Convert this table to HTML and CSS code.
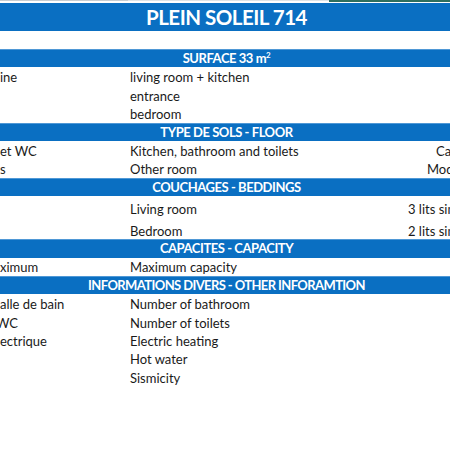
FILE: index.html
```html
<!DOCTYPE html>
<html>
<head>
<meta charset="utf-8">
<link rel="stylesheet" href="styles.css">
</head>
<body>
<div class="sheet">
  <div class="topline"><span class="tl-a"></span><span class="tl-b"></span><span class="tl-c"></span></div>
  <div class="title">PLEIN SOLEIL 714</div>
  <div class="blank"></div>

  <div class="bar">SURFACE 33 m<sup>2</sup></div>
  <div class="row"><span class="ca">ine</span><span class="cb">living room + kitchen</span><span class="cc"></span></div>
  <div class="row"><span class="ca"></span><span class="cb">entrance</span><span class="cc"></span></div>
  <div class="row"><span class="ca"></span><span class="cb">bedroom</span><span class="cc"></span></div>

  <div class="bar">TYPE DE SOLS - FLOOR</div>
  <div class="row"><span class="ca">et WC</span><span class="cb">Kitchen, bathroom and toilets</span><span class="cc c-ca">Carrelage</span></div>
  <div class="row"><span class="ca">s</span><span class="cb">Other room</span><span class="cc c-mo">Moquette</span></div>

  <div class="bar">COUCHAGES - BEDDINGS</div>
  <div class="row tall"><span class="ca"></span><span class="cb">Living room</span><span class="cc c-li">3 lits simples</span></div>
  <div class="row tall"><span class="ca"></span><span class="cb">Bedroom</span><span class="cc c-li">2 lits simples</span></div>

  <div class="bar">CAPACITES - CAPACITY</div>
  <div class="row"><span class="ca">ximum</span><span class="cb">Maximum capacity</span><span class="cc"></span></div>

  <div class="bar bar-info">INFORMATIONS DIVERS - OTHER INFORAMTION</div>
  <div class="row"><span class="ca">alle de bain</span><span class="cb">Number of bathroom</span><span class="cc"></span></div>
  <div class="row"><span class="ca wc">WC</span><span class="cb">Number of toilets</span><span class="cc"></span></div>
  <div class="row"><span class="ca">ectrique</span><span class="cb">Electric heating</span><span class="cc"></span></div>
  <div class="row"><span class="ca"></span><span class="cb">Hot water</span><span class="cc"></span></div>
  <div class="row"><span class="ca"></span><span class="cb">Sismicity</span><span class="cc"></span></div>
</div>
</body>
</html>
```

FILE: styles.css
```css
html, body {
  margin: 0;
  padding: 0;
  background: #ffffff;
}
.sheet {
  width: 450px;
  height: 450px;
  overflow: hidden;
  font-family: Lato, "Liberation Sans", sans-serif;
  color: #1a1a1a;
}
.topline {
  display: flex;
  height: 3px;
  background: #ffffff;
}
.tl-a {
  width: 128px;
  border-top: 1px solid #c9cdd1;
}
.tl-b {
  width: 201px;
  border-top: 1px solid #dfe3e6;
}
.tl-c {
  flex: 1;
  border-top: 2px solid #2f6f5e;
}
.title {
  height: 28px;
  background: #0a6fc2;
  color: #ffffff;
  font-weight: 700;
  font-size: 20.5px;
  letter-spacing: -0.5px;
  line-height: 29px;
  text-align: center;
  padding-left: 3px;
}
.blank {
  height: 18px;
}
.bar {
  height: 18.4px;
  box-sizing: border-box;
  background: #0a6fc2;
  border-top: 1px solid #4f98d6;
  color: #ffffff;
  font-weight: 700;
  font-size: 13px;
  letter-spacing: -0.45px;
  line-height: 17px;
  text-align: center;
  padding-left: 3px;
  white-space: nowrap;
}
.bar-info {
  letter-spacing: -0.6px;
}
.bar sup {
  font-size: 8px;
  line-height: 0;
  vertical-align: 5px;
}
.row {
  height: 18.4px;
  display: flex;
  align-items: flex-end;
  font-size: 13px;
  line-height: 16px;
  padding-bottom: 0.5px;
  box-sizing: border-box;
  white-space: nowrap;
}
.row.tall {
  height: 21.5px;
}
.ca {
  width: 130px;
  flex: none;
  overflow: hidden;
}
.ca.wc {
  text-indent: -4px;
}
.cb {
  width: 250px;
  flex: none;
}
.cc {
  flex: 1;
  overflow: hidden;
}
.c-ca { padding-left: 56px; }
.c-mo { padding-left: 47px; }
.c-li { padding-left: 28px; }
```
